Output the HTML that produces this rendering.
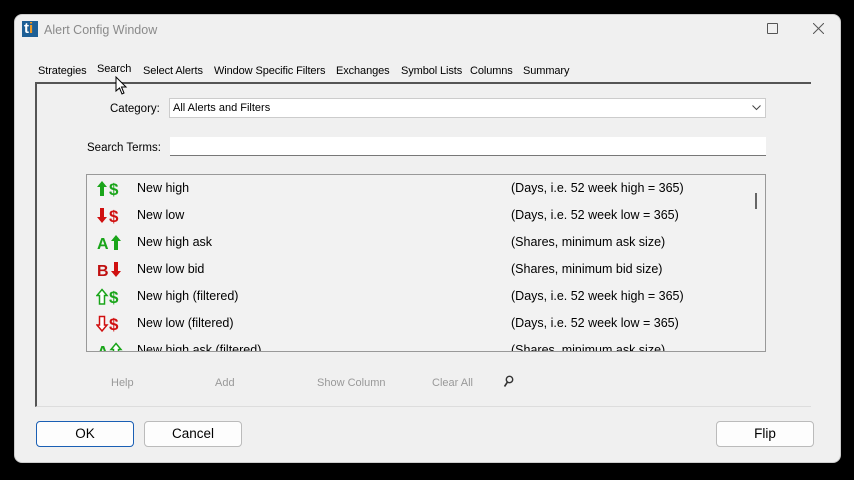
<!DOCTYPE html>
<html><head><style>
*{margin:0;padding:0;box-sizing:border-box}
body{width:854px;height:480px;background:#000;position:relative;overflow:hidden;font-family:"Liberation Sans",sans-serif;font-size:12px;color:#000}
.win{position:absolute;left:14px;top:14px;width:827px;height:449px;background:#f0f0f0;border-radius:8px;border:1px solid #ccc}
.a{position:absolute;white-space:nowrap}
.tab{position:absolute;top:65px;font-size:11px;letter-spacing:-0.1px}
.row{position:absolute;left:0;height:27px;width:100%}
.row svg{position:absolute;left:9px;top:5px}
.row .n{position:absolute;left:50px;top:6px;font-size:12.5px}
.row .d{position:absolute;left:424px;top:6px;font-size:12.5px}
.btn{position:absolute;top:421px;height:26px;border:1px solid #bbb;border-radius:4px;background:#fdfdfd;text-align:center;line-height:24px;font-size:13.5px}
.fb{position:absolute;top:377px;color:#999;font-size:11px}
</style></head><body>
<div class="win"></div>
<div class="a" style="left:22px;top:21px;width:16px;height:16px;background:#1d5f96;font-weight:bold;font-size:15px;line-height:16px;color:#fff;padding-left:2px">t<span style="color:#f29a22">i</span></div>
<div class="a" style="left:44px;top:23px;font-size:12.5px;color:#8a8a8a">Alert Config Window</div>
<div class="a" style="left:767px;top:23px;width:11px;height:11px;border:1px solid #555;border-radius:1px"></div>
<svg class="a" style="left:813px;top:23px" width="11" height="11"><path d="M0 0L11 11M11 0L0 11" stroke="#555" stroke-width="1"/></svg>
<div class="tab" style="left:38px">Strategies</div>
<div class="tab" style="left:97px;top:63px">Search</div>
<div class="tab" style="left:143px">Select Alerts</div>
<div class="tab" style="left:214px">Window Specific Filters</div>
<div class="tab" style="left:336px">Exchanges</div>
<div class="tab" style="left:401px">Symbol Lists</div>
<div class="tab" style="left:470px">Columns</div>
<div class="tab" style="left:523px">Summary</div>
<div class="a" style="left:35px;top:82px;width:776px;height:325px;border-left:2px solid #555;border-top:2px solid #555;border-bottom:1px solid #ddd"></div>
<svg class="a" style="left:115px;top:76px" width="16" height="20" viewBox="0 0 16 20"><path d="M1 1 L1 15 L4.5 12 L7 18 L9 17 L6.5 11 L11 11 Z" fill="#fff" stroke="#000" stroke-width="1"/></svg>
<div class="a" style="left:110px;top:103px;font-size:11.5px">Category:</div>
<div class="a" style="left:169px;top:98px;width:597px;height:20px;background:#fff;border:1px solid #ccc"></div>
<div class="a" style="left:173px;top:102px;font-size:11px">All Alerts and Filters</div>
<svg class="a" style="left:752px;top:105px" width="9" height="6"><path d="M0.5 0.5L4.5 4.5L8.5 0.5" fill="none" stroke="#444"/></svg>
<div class="a" style="left:87px;top:142px;font-size:11.5px">Search Terms:</div>
<div class="a" style="left:170px;top:137px;width:596px;height:19px;background:#fff;border-bottom:1px solid #777"></div>
<div class="a" style="left:86px;top:174px;width:680px;height:178px;border:1px solid #999;background:#f2f2f2;overflow:hidden">
 <div class="row" style="top:0"><svg width="30" height="18"><path d="M6 1L11 7H8V16H4V7H1Z" fill="#1aa51a"/><text x="13" y="15" font-family="Liberation Sans" font-weight="bold" font-size="17" fill="#1aa51a">$</text></svg><span class="n">New high</span><span class="d">(Days, i.e. 52 week high = 365)</span></div>
 <div class="row" style="top:27px"><svg width="30" height="18"><path d="M6 16L11 10H8V1H4V10H1Z" fill="#d01010"/><text x="13" y="15" font-family="Liberation Sans" font-weight="bold" font-size="17" fill="#d01010">$</text></svg><span class="n">New low</span><span class="d">(Days, i.e. 52 week low = 365)</span></div>
 <div class="row" style="top:54px"><svg width="30" height="18"><text x="1" y="15" font-family="Liberation Sans" font-weight="bold" font-size="16" fill="#1aa51a">A</text><path d="M20 1L25 7H22V16H18V7H15Z" fill="#1aa51a"/></svg><span class="n">New high ask</span><span class="d">(Shares, minimum ask size)</span></div>
 <div class="row" style="top:81px"><svg width="30" height="18"><text x="1" y="15" font-family="Liberation Sans" font-weight="bold" font-size="16" fill="#c01010">B</text><path d="M20 16L25 10H22V1H18V10H15Z" fill="#d01010"/></svg><span class="n">New low bid</span><span class="d">(Shares, minimum bid size)</span></div>
 <div class="row" style="top:108px"><svg width="30" height="18"><path d="M6 1.5L11 7.5H8.5V16H3.5V7.5H1Z" fill="#fff" stroke="#1aa51a" stroke-width="1.5"/><text x="13" y="15" font-family="Liberation Sans" font-weight="bold" font-size="17" fill="#1aa51a">$</text></svg><span class="n">New high (filtered)</span><span class="d">(Days, i.e. 52 week high = 365)</span></div>
 <div class="row" style="top:135px"><svg width="30" height="18"><path d="M6 16L11 10H8.5V1.5H3.5V10H1Z" fill="#fff" stroke="#d01010" stroke-width="1.5"/><text x="13" y="15" font-family="Liberation Sans" font-weight="bold" font-size="17" fill="#d01010">$</text></svg><span class="n">New low (filtered)</span><span class="d">(Days, i.e. 52 week low = 365)</span></div>
 <div class="row" style="top:162px"><svg width="30" height="18"><text x="1" y="15" font-family="Liberation Sans" font-weight="bold" font-size="16" fill="#1aa51a">A</text><path d="M20 1.5L25 7.5H22.5V16H17.5V7.5H15Z" fill="#fff" stroke="#1aa51a" stroke-width="1.5"/></svg><span class="n">New high ask (filtered)</span><span class="d">(Shares, minimum ask size)</span></div>
 <div class="a" style="left:668px;top:18px;width:2px;height:16px;background:#666"></div>
</div>
<div class="fb" style="left:111px">Help</div>
<div class="fb" style="left:215px">Add</div>
<div class="fb" style="left:317px">Show Column</div>
<div class="fb" style="left:432px">Clear All</div>
<svg class="a" style="left:503px;top:375px" width="11" height="13"><circle cx="6.5" cy="4.5" r="3.2" fill="none" stroke="#333" stroke-width="1.4"/><path d="M4.5 7L1.5 11.5" stroke="#333" stroke-width="1.6"/></svg>
<div class="btn" style="left:36px;width:98px;border-color:#1a5fb4">OK</div>
<div class="btn" style="left:144px;width:98px">Cancel</div>
<div class="btn" style="left:716px;width:98px">Flip</div>
</body></html>
